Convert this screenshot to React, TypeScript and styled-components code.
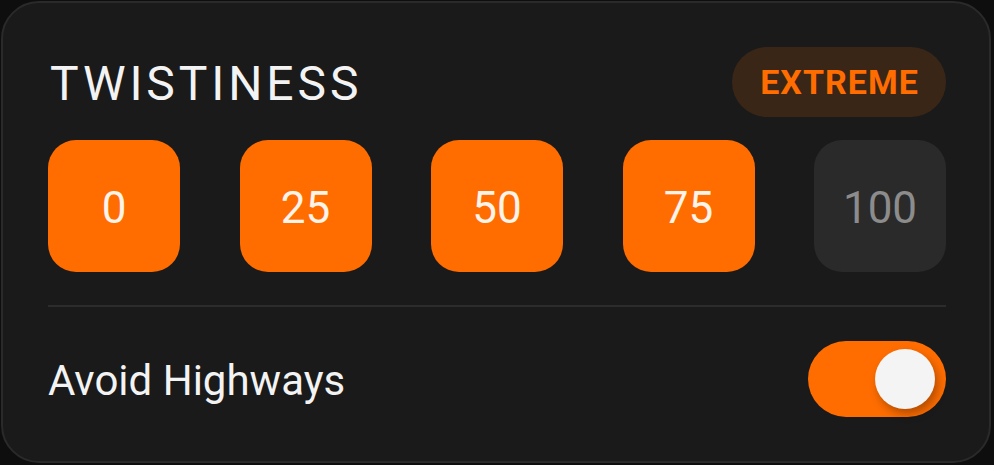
import React, { useState } from "react";
import styled, { createGlobalStyle } from "styled-components";

const GlobalStyle = createGlobalStyle`
  html, body {
    margin: 0;
    padding: 0;
    background: #0e0e0e;
  }
  body {
    font-family: Roboto, "Noto Sans", Arial, sans-serif;
    -webkit-font-smoothing: antialiased;
  }
`;

const Page = styled.div`
  padding: 1px 0 0 1px;
`;

const Card = styled.section`
  box-sizing: border-box;
  width: 990px;
  height: 462px;
  background: #1a1a1a;
  border: 2px solid #2a2a2a;
  border-radius: 38px;
  padding: 44px 43px 44px 45px;
  display: flex;
  flex-direction: column;
`;

const Header = styled.div`
  display: flex;
  align-items: center;
  justify-content: space-between;
  height: 70px;
`;

const Title = styled.h2`
  margin: 2px 0 0 2px;
  font-size: 48px;
  font-weight: 400;
  letter-spacing: 3.9px;
  color: #f3f3f3;
`;

const LevelPill = styled.span`
  display: inline-flex;
  align-items: center;
  justify-content: center;
  box-sizing: border-box;
  width: 214px;
  height: 70px;
  padding-left: 1px;
  border-radius: 35px;
  background: #3a2617;
  color: #ff6d00;
  font-size: 34px;
  font-weight: 700;
  letter-spacing: 1px;
`;

const Steps = styled.div`
  display: flex;
  justify-content: space-between;
  margin-top: 23px;
`;

const Step = styled.button<{ $active: boolean }>`
  width: 132px;
  height: 132px;
  border: none;
  border-radius: 28px;
  padding: 3px 0 0;
  font-family: inherit;
  font-size: 44px;
  font-weight: 400;
  cursor: pointer;
  background: ${(p) => (p.$active ? "#ff6d00" : "#2a2a2a")};
  color: ${(p) => (p.$active ? "#fff3ea" : "#8c8c8c")};
`;

const Divider = styled.hr`
  margin: 33px 0 0;
  border: none;
  height: 2px;
  background: #2c2c2c;
`;

const OptionRow = styled.div`
  display: flex;
  align-items: center;
  justify-content: space-between;
  margin-top: 34px;
  height: 76px;
`;

const OptionLabel = styled.span`
  padding-top: 2px;
  font-size: 42px;
  color: #f3f3f3;
`;

const Track = styled.button<{ $on: boolean }>`
  position: relative;
  width: 138px;
  height: 76px;
  border: none;
  padding: 0;
  border-radius: 38px;
  cursor: pointer;
  background: ${(p) => (p.$on ? "#ff6d00" : "#3a3a3a")};
`;

const Knob = styled.span<{ $on: boolean }>`
  position: absolute;
  top: 8px;
  left: ${(p) => (p.$on ? "67px" : "11px")};
  width: 60px;
  height: 60px;
  border-radius: 50%;
  background: #f4f4f4;
  box-shadow: 3px 5px 10px rgba(0, 0, 0, 0.3);
  transition: left 0.2s;
`;

const steps = [0, 25, 50, 75, 100];

export default function App() {
  const [level] = useState(75);
  const [avoid, setAvoid] = useState(true);

  return (
    <>
      <GlobalStyle />
      <Page>
        <Card>
          <Header>
            <Title>TWISTINESS</Title>
            <LevelPill>EXTREME</LevelPill>
          </Header>
          <Steps>
            {steps.map((s) => (
              <Step key={s} $active={s <= level}>
                {s}
              </Step>
            ))}
          </Steps>
          <Divider />
          <OptionRow>
            <OptionLabel>Avoid Highways</OptionLabel>
            <Track $on={avoid} onClick={() => setAvoid(!avoid)} aria-pressed={avoid}>
              <Knob $on={avoid} />
            </Track>
          </OptionRow>
        </Card>
      </Page>
    </>
  );
}
